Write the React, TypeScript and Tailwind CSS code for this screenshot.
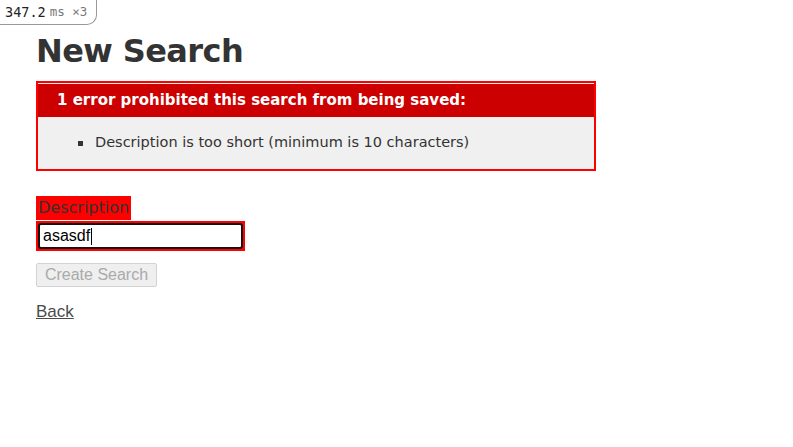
export default function App() {
  return (
    <div className="relative min-h-[447px] bg-white text-[#333] font-['DejaVu_Sans',Verdana,sans-serif]">

      {/* PROFILER BADGE */}
      <div className="absolute left-0 top-0 flex h-[25px] w-[97px] items-center gap-[4px] rounded-br-[10px] border-b border-r border-[#999] bg-white pl-[5px] font-['DejaVu_Sans_Mono',monospace]">
        <span className="text-[13.5px] text-[#222]">347.2</span>
        <span className="text-[12.5px] text-[#777]">ms ×3</span>
      </div>

      <div className="px-[36px] pt-[32px]">

        {/* HEADER */}
        <h1 className="h-[38px] text-[32px] font-bold leading-[38px] tracking-[-0.6px]">
          New Search
        </h1>

        {/* ERRORS */}
        <div className="mt-[11px] w-[560px] border-2 border-[#f00] bg-[#f0f0f0] pt-[1px]">
          <h2 className="flex h-[33px] items-center bg-[#c00] pl-[19px] text-[15px] font-bold text-white">
            1 error prohibited this search from being saved:
          </h2>
          <ul className="flex h-[52px] items-center pl-[40px] text-[14.5px]">
            <li className="flex items-center gap-[12px]">
              <span className="h-[5px] w-[5px] bg-[#333]" />
              Description is too short (minimum is 10 characters)
            </li>
          </ul>
        </div>

        {/* FORM */}
        <div className="mt-[25px]">
          <div className="inline-flex h-[24px] items-center bg-[#f00] px-[2px] text-[16px] leading-none">
            Description
          </div>
          <div className="mt-[1px] w-[209px] bg-[#f00] p-[2px]">
            <div className="flex h-[26px] items-center rounded-[3px] border-2 border-[#111] bg-white pl-[3px] font-['Liberation_Sans',Arial,sans-serif] text-[16px] text-black">
              asasdf
              <span className="ml-[1px] h-[17px] w-[1px] bg-black" />
            </div>
          </div>
        </div>

        <button
          disabled
          className="mt-[12px] flex h-[24px] w-[121px] items-center justify-center rounded-[2px] border border-[#d3d3d3] bg-[#efefef] font-['Liberation_Sans',Arial,sans-serif] text-[16px] text-[#aaa]"
        >
          Create Search
        </button>

        <div className="mt-[12px]">
          <a
            href="#"
            className="font-['Liberation_Sans',Arial,sans-serif] text-[17px] text-[#4a4a4a] underline"
          >
            Back
          </a>
        </div>

      </div>
    </div>
  );
}
